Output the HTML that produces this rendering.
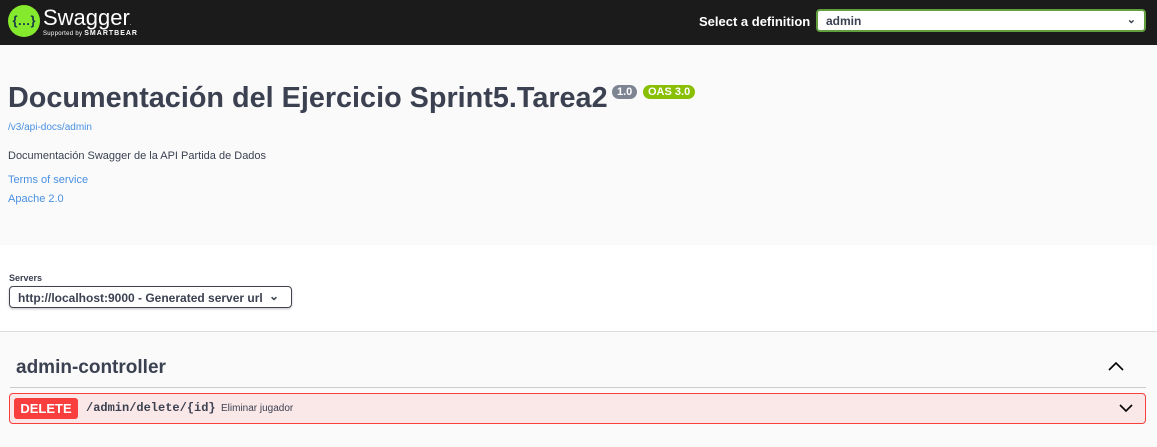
<!DOCTYPE html>
<html><head><meta charset="utf-8"><style>
*{margin:0;padding:0;box-sizing:border-box}
body{width:1157px;height:447px;overflow:hidden;font-family:"Liberation Sans",sans-serif;background:#fafafa;color:#3b4151}
.top{height:45px;background:#1b1b1b;position:relative}
.logo{position:absolute;left:8px;top:5px;width:32px;height:32px;border-radius:50%;background:#85ea2d;color:#173647;font-weight:bold;font-size:13px;text-align:center;line-height:32px}
.sw{position:absolute;left:43px;top:5px;color:#fff;font-size:22px}
.sb{position:absolute;left:43px;top:30px;color:#fff;font-size:6px;letter-spacing:.3px}
.sel{position:absolute;left:699px;top:14px;color:#fff;font-weight:bold;font-size:13px}
.selbox{position:absolute;left:816px;top:9px;width:330px;height:23px;background:#fff;border:2px solid #62a03f;border-radius:4px;font-size:12px;font-weight:bold;padding:3px 8px;color:#3b4151}
.info{position:absolute;top:45px;left:0;width:1157px;height:200px}
h1{position:absolute;left:8px;top:37px;font-size:28.8px;font-weight:bold;color:#3b4151;white-space:nowrap}
.b{position:absolute;top:40px;height:14px;border-radius:7px;color:#fff;font-size:11px;font-weight:bold;line-height:14px;padding:0 5px}
.a{position:absolute;left:8px;font-size:13px;color:#4990e2}
.servers{position:absolute;top:245px;left:0;width:1157px;height:87px;background:#fff;border-bottom:1px solid #ddd}
.srvbox{position:absolute;left:9px;top:41px;width:283px;height:22px;border:1px solid #41444e;border-radius:4px;box-shadow:0 1px 2px rgba(0,0,0,.25);font-size:12px;font-weight:bold;padding:4px 8px}
.tag{position:absolute;top:357px;left:16px;font-size:19px;font-weight:bold}
.line{position:absolute;top:387px;left:10px;width:1136px;height:1px;background:#ccc}
.op{position:absolute;left:9px;top:393px;width:1137px;height:31px;background:#fae7e7;border:1px solid #f93e3e;border-radius:4px}
.del{position:absolute;left:4px;top:4px;width:64px;height:21px;background:#f93e3e;border-radius:3px;color:#fff;font-weight:bold;font-size:13px;text-align:center;line-height:21px}
</style></head><body>
<div class="top"><div class="logo">{…}</div><div class="sw">Swagger<span style="font-size:6px">.</span></div><div class="sb">Supported by <b style="font-size:7px;letter-spacing:1px">SMARTBEAR</b></div>
<div class="sel">Select a definition</div><div class="selbox">admin<span style="position:absolute;right:8px;top:2px;font-size:11px">⌄</span></div></div>
<div class="info">
<h1>Documentación del Ejercicio Sprint5.Tarea2</h1>
<span class="b" style="left:612px;background:#7d8492">1.0</span>
<span class="b" style="left:643px;background:#89bf04">OAS 3.0</span>
<div class="a" style="top:77px;font-size:10px">/v3/api-docs/admin</div>
<div style="position:absolute;left:8px;top:105px;font-size:11px">Documentación Swagger de la API Partida de Dados</div>
<div class="a" style="top:129px;font-size:11px">Terms of service</div>
<div class="a" style="top:148px;font-size:11px">Apache 2.0</div>
</div>
<div class="servers"><div style="position:absolute;left:9px;top:28px;font-size:9px;font-weight:bold">Servers</div>
<div class="srvbox">http://localhost:9000 - Generated server url<span style="position:absolute;right:12px;top:2px">⌄</span></div></div>
<div class="tag">admin-controller</div>
<svg style="position:absolute;left:1108px;top:361px" width="16" height="10"><path d="M1 9L8 2L15 9" stroke="#000" stroke-width="1.6" fill="none"/></svg>
<div class="line"></div>
<div class="op"><div class="del">DELETE</div>
<span style="position:absolute;left:76px;top:7px;font-family:'Liberation Mono',monospace;font-size:12px;font-weight:bold;color:#3b4151">/admin/delete/{id}</span>
<span style="position:absolute;left:211px;top:9px;font-size:10px">Eliminar jugador</span>
<svg style="position:absolute;right:12px;top:10px" width="14" height="9"><path d="M1 1L7 7L13 1" stroke="#000" stroke-width="1.6" fill="none"/></svg></div>
</body></html>
